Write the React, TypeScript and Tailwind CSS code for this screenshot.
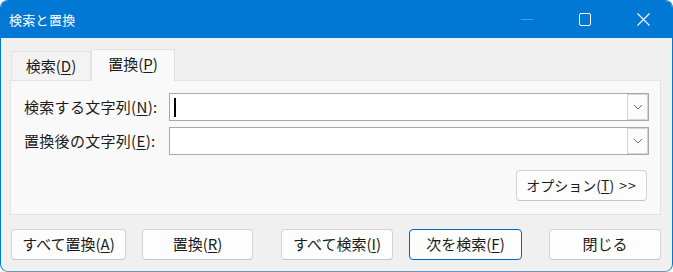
const font = { fontFamily: '"Noto Sans CJK JP", "Noto Sans", sans-serif' };

function Key({ k }: { k: string }) {
  return <span className="underline underline-offset-2 decoration-1">{k}</span>;
}

function Combo({ caret }: { caret?: boolean }) {
  return (
    <div className="flex h-[28px] border border-[#a8a8a8] bg-white">
      <div className="flex flex-1 items-center pl-[4px]">
        {caret ? <div className="h-[19px] w-[2px] bg-black" /> : null}
      </div>
      <div className="flex w-[21px] items-center justify-center border border-[#d4d4d4] bg-[#fcfcfc]">
        <svg width="10" height="6" viewBox="0 0 10 6">
          <path d="M1 1 L5 5 L9 1" fill="none" stroke="#6b6b6b" strokeWidth="1" />
        </svg>
      </div>
    </div>
  );
}

function Btn({ children, focus, w }: { children: React.ReactNode; focus?: boolean; w: string }) {
  return (
    <button
      className={
        "flex h-[31px] items-center justify-center rounded-[4px] bg-[#fdfdfd] text-[15px] text-[#1b1b1b] " +
        w +
        (focus ? " border border-[#0067c0]" : " border border-[#d3d3d3] border-b-[#c4c4c4]")
      }
    >
      {children}
    </button>
  );
}

export default function App() {
  return (
    <div className="h-[272px] w-[673px] bg-white" style={font}>
      <div className="flex h-full flex-col overflow-hidden rounded-[8px] border border-[#0078d4] border-b-[#6f96bf] bg-[#f0f0f0]">
        <div className="flex h-[37px] shrink-0 items-center bg-[#0078d4] pl-[8px] text-white">
          <span className="text-[13px] tracking-[0.3px]">検索と置換</span>
          <div className="ml-auto flex items-center">
            <div className="flex w-[58px] justify-center">
              <svg width="12" height="2" viewBox="0 0 12 2">
                <rect width="12" height="1" fill="#4d9be0" />
              </svg>
            </div>
            <div className="flex w-[58px] justify-center">
              <svg width="12" height="13" viewBox="0 0 12 13">
                <rect x="0.5" y="0.5" width="11" height="12" rx="1.5" fill="none" stroke="white" strokeWidth="1" />
              </svg>
            </div>
            <div className="flex w-[58px] justify-center">
              <svg width="13" height="13" viewBox="0 0 13 13">
                <path d="M0.5 0.5 L12.5 12.5 M12.5 0.5 L0.5 12.5" stroke="white" strokeWidth="1.1" />
              </svg>
            </div>
          </div>
        </div>

        <div className="flex flex-1 flex-col pl-[9px] pr-[11px] pt-[10px]">
          <div className="flex items-end pl-[1px]">
            <div className="flex h-[29px] w-[80px] items-center justify-center border border-b-0 border-[#e3e3e3] bg-[#f3f3f3] text-[15px] text-[#1b1b1b]">
              検索(<Key k="D" />)
            </div>
            <div className="relative top-[1px] flex h-[32px] w-[84px] items-center justify-center border border-b-0 border-[#e3e3e3] bg-[#f9f9f9] pb-[2px] text-[15px] text-[#1b1b1b]">
              置換(<Key k="P" />)
            </div>
          </div>

          <div className="flex h-[135px] flex-col border border-[#e3e3e3] bg-[#f9f9f9] pl-[13px] pr-[11px] pt-[12px]">
            <div className="grid grid-cols-[145px_1fr] items-center gap-y-[6px] text-[15px] text-[#1b1b1b]">
              <span className="tracking-[0.3px]">
                検索する文字列(<Key k="N" />):
              </span>
              <Combo caret />
              <span className="tracking-[0.3px]">
                置換後の文字列(<Key k="E" />):
              </span>
              <Combo />
            </div>
            <div className="mt-[15px] flex justify-end pr-[2px]">
              <Btn w="w-[131px]">
                <span className="text-[14px]">
                  オプション(<Key k="T" />)<span className="ml-[5px] tracking-[1px]">&gt;&gt;</span>
                </span>
              </Btn>
            </div>
          </div>

          <div className="mt-[14px] flex items-center pl-[1px]">
            <Btn w="w-[116px]">
              すべて置換(<Key k="A" />)
            </Btn>
            <div className="ml-[16px]">
              <Btn w="w-[111px]">
                置換(<Key k="R" />)
              </Btn>
            </div>
            <div className="ml-[28px]">
              <Btn w="w-[112px]">
                すべて検索(<Key k="I" />)
              </Btn>
            </div>
            <div className="ml-[16px]">
              <Btn focus w="w-[113px]">
                次を検索(<Key k="F" />)
              </Btn>
            </div>
            <div className="ml-[27px]">
              <Btn w="w-[112px]">閉じる</Btn>
            </div>
          </div>
        </div>
      </div>
    </div>
  );
}
